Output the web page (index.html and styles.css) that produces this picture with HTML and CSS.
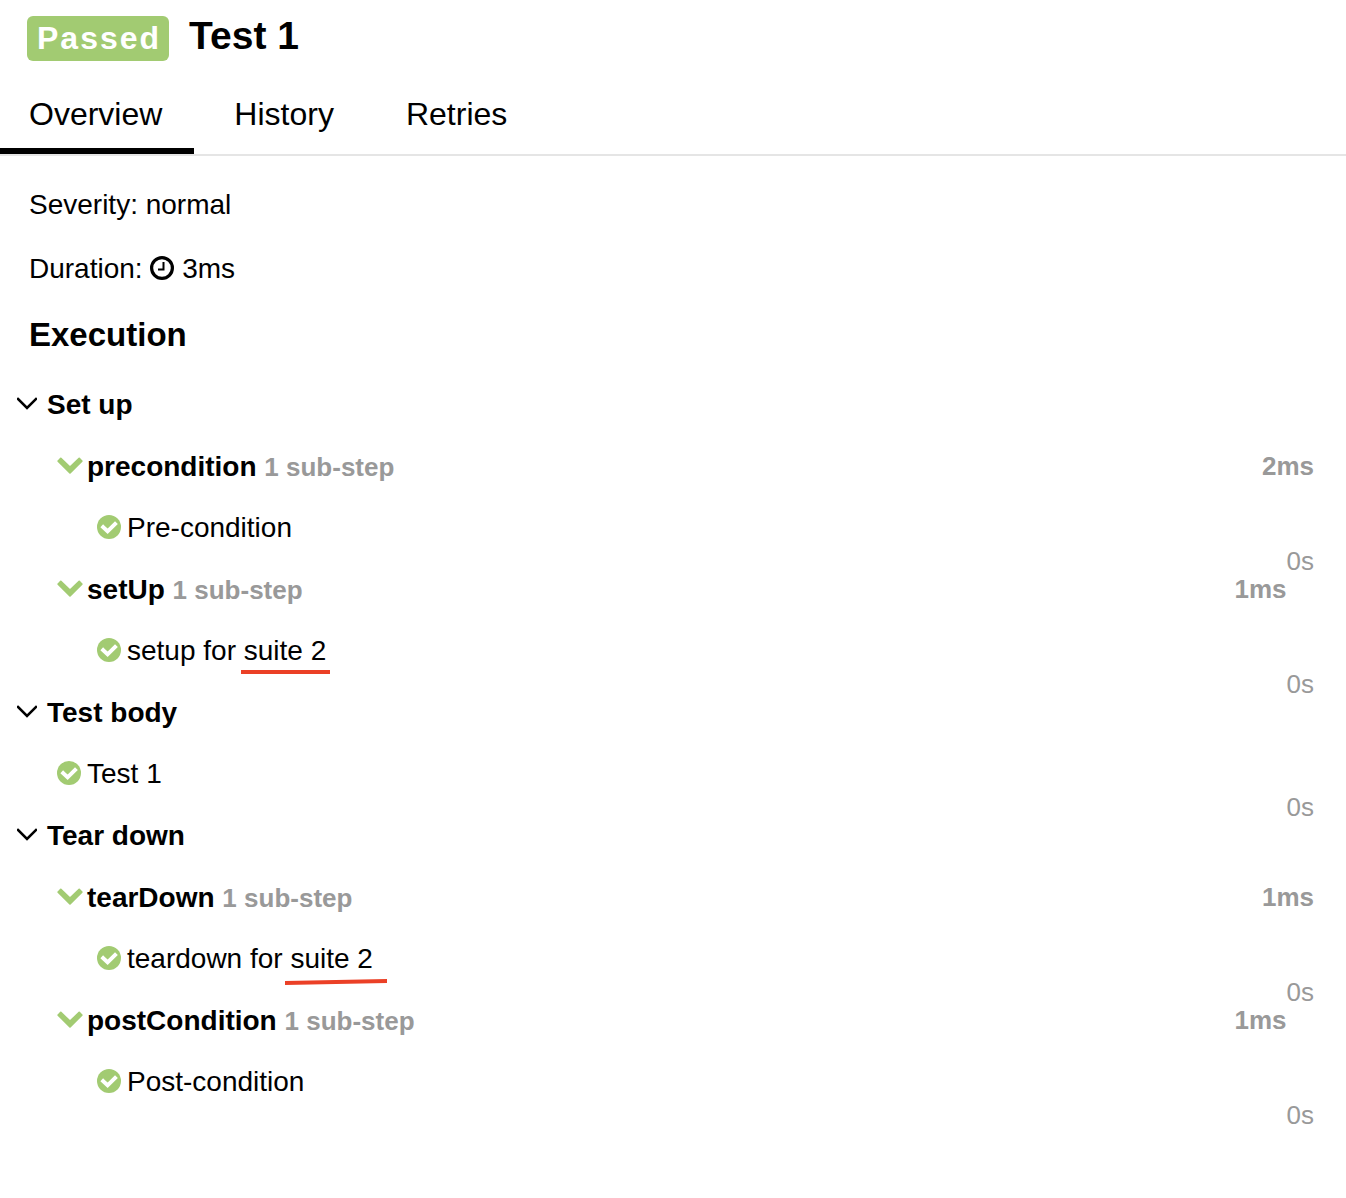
FILE: index.html
```html
<!DOCTYPE html>
<html lang="en">
<head>
<meta charset="utf-8">
<meta name="viewport" content="width=device-width, initial-scale=1">
<title>Test 1</title>
<link rel="stylesheet" href="styles.css">
</head>
<body>
<svg class="sprite" aria-hidden="true">
  <symbol id="angle" viewBox="0 0 20 14"><path d="M1 2 10 11 19 2" fill="none" stroke="currentColor" stroke-width="2.600" stroke-linecap="square"/></symbol>
  <symbol id="chevron" viewBox="0 0 26 18"><path d="M3.800.6a.8.8 0 0 1 .6.200L13 9.100 21.600.8a.8.8 0 0 1 1.200 0L25.400 3.500a.8.8 0 0 1 0 1.200L13.600 16.500a.8.8 0 0 1-1.200 0L.6 4.700a.8.8 0 0 1 0-1.200L3.200.8a.8.8 0 0 1 .6-.2Z" fill="currentColor"/></symbol>
  <symbol id="check" viewBox="0 0 24 24"><circle cx="12" cy="12" r="12" fill="currentColor"/><path d="M6.200 12.200 10.600 16.300 18 9" fill="none" stroke="#fff" stroke-width="4" stroke-linecap="square"/></symbol>
  <symbol id="clock" viewBox="0 0 24 24"><circle cx="12" cy="12" r="10.400" fill="none" stroke="currentColor" stroke-width="3.200"/><path d="M13.500 6v7.500H8" fill="none" stroke="currentColor" stroke-width="2"/></symbol>
</svg>

<header class="header">
  <span class="badge">Passed</span>
  <h1 class="title">Test 1</h1>
</header>

<nav class="tabs">
  <a class="tab tab-active" href="#overview">Overview</a>
  <a class="tab" href="#history">History</a>
  <a class="tab" href="#retries">Retries</a>
</nav>

<main id="overview">
  <section class="info">
    <p class="fact">Severity: normal</p>
    <p class="fact">Duration: <svg class="icon-clock"><use href="#clock"/></svg> 3ms</p>
    <h2 class="heading">Execution</h2>
  </section>

  <section class="stage">
    <div class="row"><button class="toggle" type="button"><svg class="icon-angle"><use href="#angle"/></svg>Set up</button></div>
    <div class="children">
      <div class="row"><button class="toggle" type="button"><svg class="icon-chevron"><use href="#chevron"/></svg>precondition <span class="count">1 sub-step</span></button><span class="time time-bold">2ms</span></div>
      <div class="children">
        <div class="row leaf"><div class="name"><svg class="icon-check"><use href="#check"/></svg>Pre-condition</div><span class="time">0s</span></div>
      </div>
      <div class="row"><button class="toggle" type="button"><svg class="icon-chevron"><use href="#chevron"/></svg>setUp <span class="count">1 sub-step</span></button><span class="time time-bold">1ms</span></div>
      <div class="children">
        <div class="row leaf"><div class="name"><svg class="icon-check"><use href="#check"/></svg>setup for <span class="marked">suite 2<svg class="stroke" viewBox="0 0 89 4" preserveAspectRatio="none"><path d="M0 0H89V4H0Z"/></svg></span></div><span class="time">0s</span></div>
      </div>
    </div>
  </section>

  <section class="stage">
    <div class="row"><button class="toggle" type="button"><svg class="icon-angle"><use href="#angle"/></svg>Test body</button></div>
    <div class="children">
      <div class="row leaf"><div class="name"><svg class="icon-check"><use href="#check"/></svg>Test 1</div><span class="time">0s</span></div>
    </div>
  </section>

  <section class="stage">
    <div class="row"><button class="toggle" type="button"><svg class="icon-angle"><use href="#angle"/></svg>Tear down</button></div>
    <div class="children">
      <div class="row"><button class="toggle" type="button"><svg class="icon-chevron"><use href="#chevron"/></svg>tearDown <span class="count">1 sub-step</span></button><span class="time time-bold">1ms</span></div>
      <div class="children">
        <div class="row leaf"><div class="name"><svg class="icon-check"><use href="#check"/></svg>teardown for <span class="marked">suite 2<svg class="stroke stroke-long" viewBox="0 0 102 6" preserveAspectRatio="none"><path d="M0 2 102 0V4L0 6Z"/></svg></span></div><span class="time">0s</span></div>
      </div>
      <div class="row"><button class="toggle" type="button"><svg class="icon-chevron"><use href="#chevron"/></svg>postCondition <span class="count">1 sub-step</span></button><span class="time time-bold">1ms</span></div>
      <div class="children">
        <div class="row leaf"><div class="name"><svg class="icon-check"><use href="#check"/></svg>Post-condition</div><span class="time">0s</span></div>
      </div>
    </div>
  </section>
</main>
</body>
</html>
```
FILE: styles.css
```css
* {
  box-sizing: border-box;
}

body {
  margin: 0;
  background: #fff;
  color: #000;
  font: 28px/34px "Liberation Sans", Arial, sans-serif;
}

.sprite {
  display: none;
}

.header {
  display: flex;
  align-items: flex-start;
  gap: 20px;
  padding: 16px 28px 0 27px;
}

.badge {
  padding: 0 8px 0 10px;
  border-radius: 6px;
  background: #a2cb72;
  color: #fff;
  font-size: 32px;
  font-weight: bold;
  line-height: 45px;
  letter-spacing: 2px;
}

.title {
  margin: 0;
  font-size: 39px;
  line-height: 40px;
}

.tabs {
  display: flex;
  gap: 8px;
  margin-top: 17px;
  border-bottom: 2px solid #e5e5e5;
}

.tab {
  padding: 18px 32px 16px;
  border-bottom: 6px solid transparent;
  color: inherit;
  font-size: 32px;
  line-height: 36px;
  text-decoration: none;
}

.tab-active {
  padding-left: 29px;
  border-bottom-color: #000;
}

.info {
  padding: 32px 29px 20px;
}

.fact {
  margin: 0 0 30px;
}

.heading {
  margin: 0;
  font-size: 33px;
  line-height: 38px;
}

.icon-clock {
  width: 24px;
  height: 24px;
  vertical-align: -2px;
}

.stage {
  padding: 0 32px 0 17px;
}

.children {
  padding-left: 40px;
}

.row {
  padding: 14px 0;
}

.leaf {
  padding-top: 13px;
}

.toggle {
  padding: 0;
  border: 0;
  background: none;
  color: inherit;
  font: inherit;
  font-weight: bold;
  vertical-align: top;
  text-align: left;
  cursor: pointer;
}

.icon-angle {
  width: 20px;
  height: 14px;
  margin-right: 10px;
  vertical-align: 3px;
}

.icon-chevron {
  width: 26px;
  height: 18px;
  margin-right: 4px;
  vertical-align: 1px;
  color: #a2cb72;
}

.icon-check {
  width: 24px;
  height: 24px;
  margin-right: 6px;
  vertical-align: -2px;
  color: #a2cb72;
}

.row svg {
  overflow: visible;
}

.count,
.time {
  color: #999;
  font-size: 26px;
}

/* A leaf's time floats below its name and pushes the next row's time aside. */
.time {
  float: right;
  line-height: 32px;
}

.time-bold {
  font-weight: bold;
}

.marked {
  position: relative;
}

.stroke {
  position: absolute;
  top: 35px;
  left: -3px;
  width: 89px;
  height: 4px;
  fill: #eb4026;
}

.stroke-long {
  top: 36px;
  left: -5px;
  width: 102px;
  height: 6px;
}
```
